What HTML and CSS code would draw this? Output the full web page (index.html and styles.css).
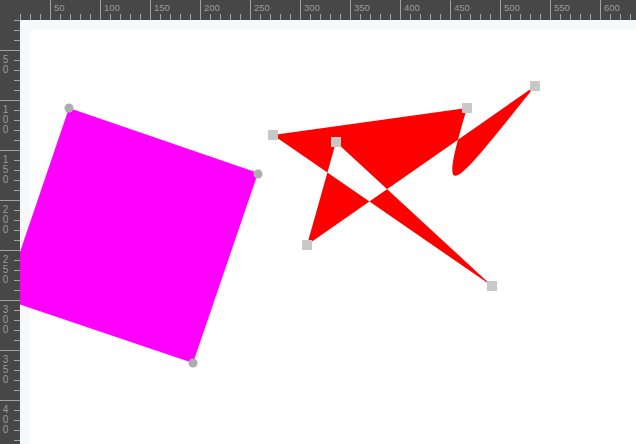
FILE: index.html
```html
<!DOCTYPE html>
<html lang="en">
<head>
    <meta charset="UTF-8">
    <meta name="viewport" content="width=device-width, initial-scale=1.0">
    <title>Shape editor</title>
    <link rel="stylesheet" href="styles.css">
</head>
<body>

    <div class="editor">
        <div class="corner"></div>

        <div class="ruler ruler-top">
            <span class="ruler-offset"></span>
            <span class="mark">50</span>
            <span class="mark">100</span>
            <span class="mark">150</span>
            <span class="mark">200</span>
            <span class="mark">250</span>
            <span class="mark">300</span>
            <span class="mark">350</span>
            <span class="mark">400</span>
            <span class="mark">450</span>
            <span class="mark">500</span>
            <span class="mark">550</span>
            <span class="mark">600</span>
        </div>

        <div class="ruler ruler-left">
            <span class="ruler-offset"></span>
            <span class="mark"><i>5</i><i>0</i></span>
            <span class="mark"><i>1</i><i>0</i><i>0</i></span>
            <span class="mark"><i>1</i><i>5</i><i>0</i></span>
            <span class="mark"><i>2</i><i>0</i><i>0</i></span>
            <span class="mark"><i>2</i><i>5</i><i>0</i></span>
            <span class="mark"><i>3</i><i>0</i><i>0</i></span>
            <span class="mark"><i>3</i><i>5</i><i>0</i></span>
            <span class="mark"><i>4</i><i>0</i><i>0</i></span>
        </div>

        <div class="viewport">
            <div class="paper"></div>
            <svg class="scene" viewBox="20 20 616 424">
                <!-- 四角形 -->
                <polygon class="shape-rect" points="69,108 258,173 193,363 4,299"/>
                <g class="handle-round">
                    <circle cx="69" cy="108" r="4.5"/>
                    <circle cx="258" cy="174" r="4.5"/>
                    <circle cx="193" cy="363" r="4.5"/>
                    <circle cx="4" cy="299" r="4.5"/>
                </g>

                <!-- パス -->
                <path class="shape-path" d="M273 135 L467 108 C436 212 452 190 535 86 L307 245 L336 142 L492 286 Z"/>
                <g class="handle-square">
                    <rect x="268" y="130" width="10" height="10"/>
                    <rect x="331" y="137" width="10" height="10"/>
                    <rect x="462" y="103" width="10" height="10"/>
                    <rect x="530" y="81" width="10" height="10"/>
                    <rect x="302" y="240" width="10" height="10"/>
                    <rect x="487" y="281" width="10" height="10"/>
                </g>
            </svg>
        </div>
    </div>

</body>
</html>
```

FILE: styles.css
```css
/* 基本 */
body {
    margin: 0;
    font-family: "Liberation Sans", Arial, sans-serif;
    background-color: #fff;
    overflow: hidden;
}

.editor {
    display: grid;
    grid-template-columns: 20px 1fr;
    grid-template-rows: 20px 1fr;
    width: 100vw;
    height: 100vh;
}

/* --- ルーラー --- */
.corner { background-color: #474747; }

.ruler {
    display: flex;
    overflow: hidden;
    background-color: #474747;
    color: #9a9a9a;
    font-size: 9.5px;
    line-height: 10px;
}

.ruler-top {
    background-image: repeating-linear-gradient(to right, #a3a3a3 0 1px, transparent 1px 10px);
    background-size: 100% 6px;
    background-position: left bottom;
    background-repeat: no-repeat;
}
.ruler-top .ruler-offset { flex: 0 0 30px; }
.ruler-top .mark {
    flex: 0 0 50px;
    box-sizing: border-box;
    height: 20px;
    padding: 3px 0 0 3px;
    border-left: 1px solid #a3a3a3;
}

.ruler-left {
    flex-direction: column;
    font-size: 10px;
    background-image: repeating-linear-gradient(to bottom, #a3a3a3 0 1px, transparent 1px 10px);
    background-size: 6px 100%;
    background-position: right top;
    background-repeat: no-repeat;
}
.ruler-left .ruler-offset { flex: 0 0 30px; }
.ruler-left .mark {
    flex: 0 0 50px;
    box-sizing: border-box;
    padding-top: 4px;
    border-top: 1px solid #a3a3a3;
}
.ruler-left .mark i {
    display: block;
    width: 11px;
    height: 10px;
    font-style: normal;
    text-align: center;
}

/* --- キャンバス --- */
.viewport {
    position: relative;
    overflow: hidden;
    background-color: #f7f8fa;
}
.paper {
    height: calc(100% - 10px);
    margin: 10px 0 0 10px;
    background-color: #fff;
}
.scene {
    position: absolute;
    top: 0;
    left: 0;
    width: 100%;
    height: 100%;
}

.shape-rect { fill: #ff00ff; }
.shape-path { fill: #ff0000; fill-rule: evenodd; }
.handle-round circle { fill: #adadad; }
.handle-square rect { fill: #c8c8c8; }
```
